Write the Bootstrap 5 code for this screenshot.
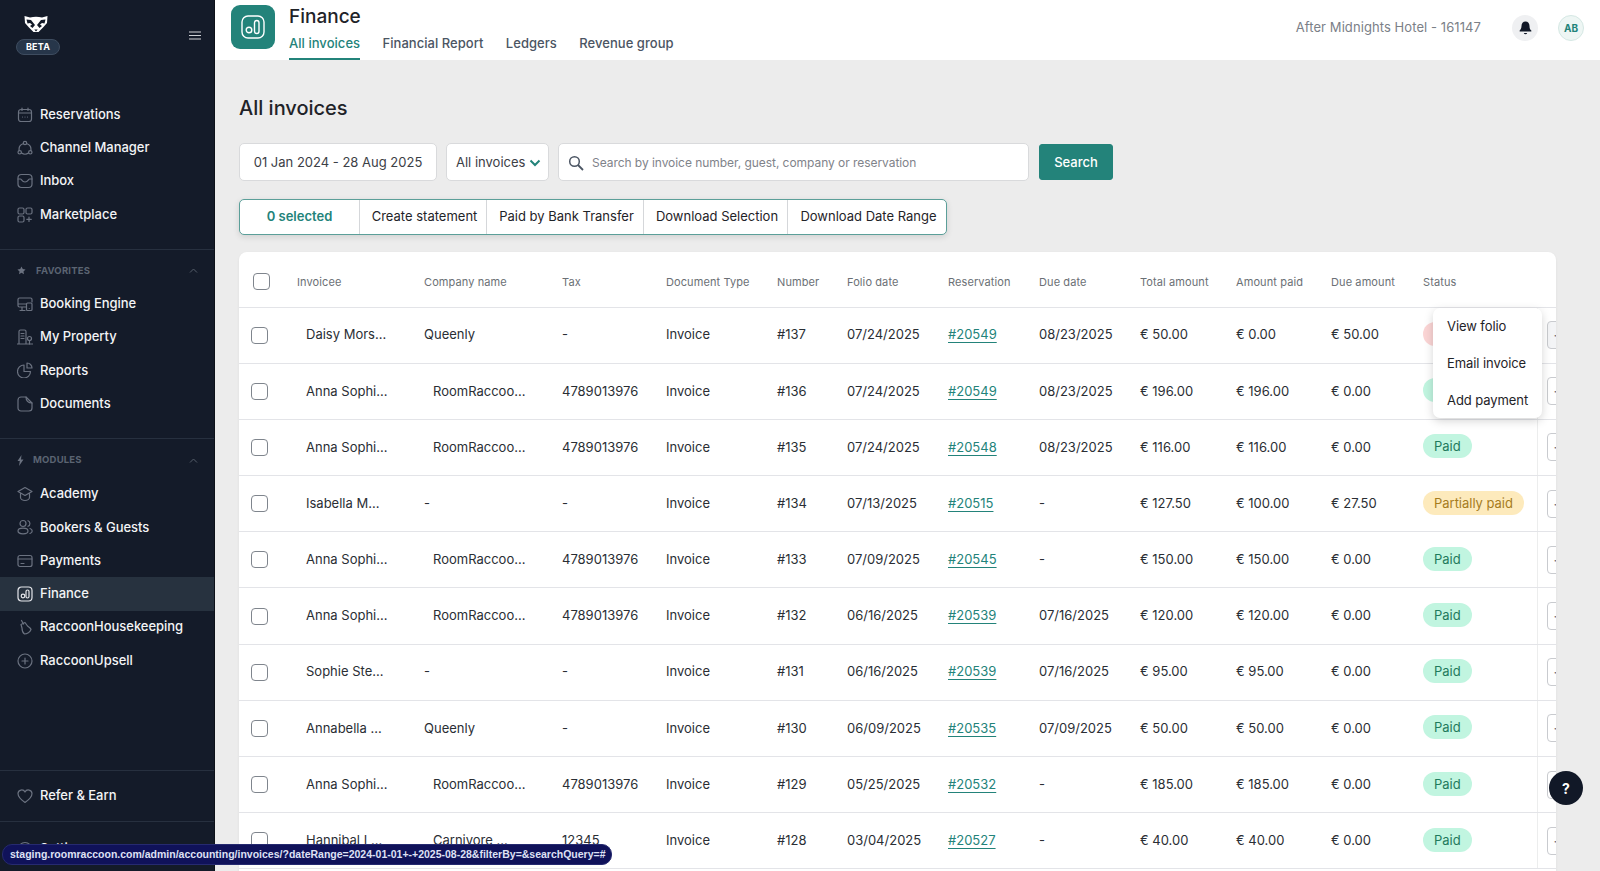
<!doctype html>
<html lang="en"><head><meta charset="utf-8"><title>All invoices</title>
<link rel="stylesheet" href="https://cdn.jsdelivr.net/npm/bootstrap@5.3.0/dist/css/bootstrap.min.css">
<style>
html,body{height:871px;overflow:hidden}
body{font-family:Inter,"Liberation Sans",sans-serif;background:#ececec;color:#1f2328;font-size:13px}
.app-shell{height:871px}
.side{width:215px;flex:none;background:#141b29;color:#f3f4f6;height:871px;overflow:hidden;border-right:1px solid #0d1119}
.side-top{height:98px;padding:15px 12px 0 16px}
.beta-pill{width:44px;height:16px;margin-top:6px;border-radius:8px;background:#27364a;border:1px solid #3e4c5f;font-size:9px;font-weight:700;color:#fff;line-height:14px;text-align:center;letter-spacing:.2px}
.side-link{height:33.3px;padding-left:17px;gap:7px;color:#f3f4f6;font-size:13px;font-weight:500;text-decoration:none;white-space:nowrap;letter-spacing:-.03px}
.side-link svg{width:16px;height:16px;flex:none;stroke:#6b7280;fill:none;stroke-width:1.2;stroke-linecap:round;stroke-linejoin:round}
.side-link.on{background:#27323f}
.side-link.on svg{stroke:#e5e7eb}
.side-sect{border-top:1px solid #27303f}
.sect-head{height:37px;padding:4px 16px 0 17px;color:#5b6472;font-size:9.5px;font-weight:700;letter-spacing:.2px}
.top-head{height:60px;background:#fff;padding:5px 0 0 16px;position:relative}
.app-tile{width:44px;height:44px;border-radius:9px;background:#23837a;margin-right:14px}
.page-name{font-size:19px;font-weight:500;line-height:22px;color:#1f2328;margin-top:1px}
.tab-link{font-size:13px;font-weight:500;color:#4b5563;text-decoration:none;padding:8px 0 6px;line-height:17px;border-bottom:2px solid transparent;margin-right:22.4px;letter-spacing:.04px}
.tab-link.on{color:#23837a;border-color:#23837a}
.hotel-name{font-size:13px;color:#7b8087;margin-right:31px;letter-spacing:.08px}
.round-btn{width:26px;height:26px;border-radius:50%;background:#eff0f2}
.avatar-btn{width:26px;height:26px;border-radius:50%;background:#eef6f4;border:1px solid #d5e8e4;color:#23837a;font-size:10px;font-weight:700;margin:0 16px 0 20px}
.work-area{padding:0 44px 0 24px;position:relative}
.title-big{font-size:20px;font-weight:500;color:#1f2328;margin:35px 0 21px;line-height:27px}
.filter-box{height:38px;background:#fff;border:1px solid #d9dadc;border-radius:5px;font-size:13px;color:#3c4046;padding-top:1px}
.date-box{width:198px}
.select-box{width:103px;margin-left:9px;padding-left:9px}
.search-box{width:471px;margin-left:9px;padding-left:9px;font-size:12px;color:#7f838a;letter-spacing:-.05px}
.btn-go{width:74px;height:36px;margin-left:10px;background:#23837a;border:1px solid #23837a;color:#fff;font-size:13px;font-weight:500;border-radius:3px;padding:1px 0 0}
.act-group{height:36px;width:708px;margin-top:18px;background:#fff;border:1px solid #5b9f99;border-radius:5px;box-shadow:0 2px 6px rgba(0,0,0,.12);overflow:hidden}
.act-group>div{border-right:1px solid #d5d7da;font-size:13px;color:#1f2328;padding-left:3px}
.act-group>div:last-child{border-right:0}
.act-group>div.sel-count{color:#23837a;font-weight:600;padding-left:0}
.grid-card{width:1317px;height:640px;margin-top:17px;background:#fff;border-radius:8px 8px 0 0;box-shadow:0 1px 3px rgba(0,0,0,.06);overflow:hidden}
.inv-grid{table-layout:fixed;width:1377px;margin:0;--bs-table-border-color:#e3e4e8;font-size:13px;color:#2a2e34}
.inv-grid th{height:55px;padding:5px 0 0;font-size:11px;font-weight:400;color:#6b7075;vertical-align:middle;letter-spacing:.1px;white-space:nowrap}
.inv-grid td{height:56.2px;padding:0;vertical-align:middle;color:#2a2e34;white-space:nowrap}
.inv-grid .tick{width:17px;height:17px;margin:0 0 0 12px;border:1.5px solid #7f858d;border-radius:4px;display:block;float:none}
.inv-grid th .tick{margin-left:14px}
.push-name{padding-left:9px!important}
.push-comp{padding-left:9px!important}
.res-link{color:#23837a;text-decoration:underline;text-underline-offset:3px}
.pill-state{display:inline-block;height:24px;line-height:24px;border-radius:12px;padding:0 11px;font-size:13px;letter-spacing:-.02px;position:relative;top:-1px}
.st-paid{background:#c1f5e0;color:#1f7a5c}
.st-part{background:#fdeabc;color:#a67c1e}
.st-open{background:#fbd5d5;color:#b42318}
.act-cell{border-left:1px solid #eceded;box-shadow:-3px 0 5px rgba(0,0,0,.03)}
.dots-btn{display:block;width:40px;height:28px;margin-left:9px;border:1px solid #c9cbcf;border-radius:4px;background:#fff;color:#6b7075;font-size:13px;line-height:24px;padding:0 0 0 6px;text-align:left;letter-spacing:1px}
.dots-btn.active-row{background:#f3f4f6}
.row-menu{position:absolute;display:block;left:1218px;top:248px;width:109px;min-width:0;height:110px;padding:0;border:0;border-radius:7px;box-shadow:0 3px 10px rgba(0,0,0,.17);z-index:5}
.row-menu .dropdown-item{padding:0 0 0 14px;height:36.800px;line-height:36px;font-size:13px;color:#1f2328;letter-spacing:-.08px}
.help-fab{position:fixed;left:1549px;top:771px;width:34px;height:34px;border-radius:50%;background:#111827;color:#fff;font-weight:700;font-size:14px;z-index:6}
.status-url{position:fixed;left:2px;top:844px;width:610px;height:21px;border-radius:10px;background:#10125a;border:1px solid #262a70;color:#dfe1f5;font-family:"Liberation Sans",sans-serif;font-weight:700;font-size:10.5px;line-height:19px;padding-left:7px;white-space:nowrap;z-index:7}
</style></head>
<body>
<div class="d-flex app-shell">
<nav class="side d-flex flex-column flex-none">
  <div class="side-top d-flex justify-content-between">
    <div class="d-flex flex-column">
      <svg class="ms-2" width="24" height="18" viewBox="0 0 24 18" aria-hidden="true"><path fill="#fff" d="M.5 1L6 2.500Q12 1 18 2.500L23.500 1 23 8l-3.500 4-5 5h-5l-5-5L1 8z"/><path fill="#141b29" d="M2.500 4.500L7 5l4 5-2.500 3L6 11l2-1.500-2-1.500-2.500.5zM21.500 4.500L17 5l-4 5 2.500 3L18 11l-2-1.500 2-1.500 2.500.5zM10.300 14.500h3.400L12 16.500z"/></svg>
      <div class="beta-pill">BETA</div>
    </div>
    <svg width="14" height="9" viewBox="0 0 14 9" style="margin-top:16px" aria-hidden="true"><path d="M1 1h12M1 4.500h12M1 8h12" stroke="#cfd2d6" stroke-width="1.200"/></svg>
  </div>
  <div style="padding-bottom:18px">
    <a class="side-link d-flex align-items-center" href="#"><svg viewBox="0 0 16 16"><rect x="1.500" y="2.500" width="13" height="12" rx="2.500"/><path d="M1.500 6h13M5 1v2.500M11 1v2.500M5.500 10h.01M8 10h.01M10.500 10h.01"/></svg>Reservations</a>
    <a class="side-link d-flex align-items-center" href="#"><svg viewBox="0 0 16 16"><circle cx="8" cy="3" r="1.700"/><circle cx="2.700" cy="12.300" r="1.700"/><circle cx="13.300" cy="12.300" r="1.700"/><path d="M6 3.800A6 6 0 0 0 2.200 10.500M10 3.800a6 6 0 0 1 3.800 6.700M4.500 13a6 6 0 0 0 7 0"/></svg>Channel Manager</a>
    <a class="side-link d-flex align-items-center" href="#"><svg viewBox="0 0 16 16"><rect x="1" y="1.500" width="14" height="13" rx="3.500"/><path d="M1 6h2.500c1 0 1.500 3 4.500 3s3.500-3 4.500-3H15"/></svg>Inbox</a>
    <a class="side-link d-flex align-items-center" href="#"><svg viewBox="0 0 16 16"><rect x="1" y="1" width="6" height="6" rx="1.500"/><rect x="9" y="1" width="6" height="6" rx="1.500"/><rect x="1" y="9" width="6" height="6" rx="1.500"/><path d="M12 10v4.500M9.800 12.300h4.500"/></svg>Marketplace</a>
  </div>
  <div class="side-sect" style="padding-bottom:18px">
    <div class="sect-head d-flex align-items-center"><svg width="9" height="9" viewBox="0 0 10 10" aria-hidden="true"><path fill="#6b7280" d="M5 .5l1.400 2.900 3.100.4-2.300 2.200.6 3.200L5 7.600 2.200 9.200l.6-3.200L.5 3.800l3.100-.4z"/></svg><span style="margin-left:10px" class="flex-grow-1">FAVORITES</span><svg width="9" height="5" viewBox="0 0 9 5" aria-hidden="true"><path d="M1 4.500L4.500 1 8 4.500" stroke="#555e6b" fill="none"/></svg></div>
    <a class="side-link d-flex align-items-center" href="#"><svg viewBox="0 0 16 16"><path d="M9 11H2.500a1.500 1.500 0 0 1-1.500-1.500v-6A1.500 1.500 0 0 1 2.500 2h11A1.500 1.500 0 0 1 15 3.500V6M1 8h8M5 11v3.500M3 14.500h5"/><rect x="9.500" y="7" width="5.500" height="7.500" rx="1"/><path d="M12.200 12.500h.01"/></svg>Booking Engine</a>
    <a class="side-link d-flex align-items-center" href="#"><svg viewBox="0 0 16 16"><path d="M2 15V2.500A1.500 1.500 0 0 1 3.500 1h4A1.500 1.500 0 0 1 9 2.500V15M.5 15h15M4 4.500h3M4 7h3M4 9.500h3"/><circle cx="12.500" cy="9.500" r="2"/><path d="M12.500 11.500V15"/></svg>My Property</a>
    <a class="side-link d-flex align-items-center" href="#"><svg viewBox="0 0 16 16"><path d="M7 3a6.500 6.500 0 1 0 6.500 6.500H7z"/><path d="M10 1a5 5 0 0 1 5 5h-5z"/></svg>Reports</a>
    <a class="side-link d-flex align-items-center" href="#"><svg viewBox="0 0 16 16"><path d="M4 1h5l6 6v5a3 3 0 0 1-3 3H4a3 3 0 0 1-3-3V4a3 3 0 0 1 3-3z"/><path d="M9 1c0 3.500 2 6 6 6"/></svg>Documents</a>
  </div>
  <div class="side-sect">
    <div class="sect-head d-flex align-items-center" style="height:38px"><svg width="7" height="11" viewBox="0 0 7 11" aria-hidden="true"><path fill="#6b7280" d="M4.500 0L.5 6h2.300L2 11l4.500-6.500H4z"/></svg><span style="margin-left:9px" class="flex-grow-1">MODULES</span><svg width="9" height="5" viewBox="0 0 9 5" aria-hidden="true"><path d="M1 4.500L4.500 1 8 4.500" stroke="#555e6b" fill="none"/></svg></div>
    <a class="side-link d-flex align-items-center" href="#"><svg viewBox="0 0 16 16"><path d="M8 1.500L1 5.500l7 4 7-4zM3.500 7.500v4c0 1.500 2 3 4.500 3s4.500-1.500 4.500-3v-4"/></svg>Academy</a>
    <a class="side-link d-flex align-items-center" href="#"><svg viewBox="0 0 16 16"><circle cx="6" cy="4.500" r="3"/><ellipse cx="6" cy="12" rx="5" ry="2.800"/><path d="M11 1.700a3 3 0 0 1 0 5.600M13 9.500c1.500.5 2.200 1.500 2.200 2.500S14.500 14 13 14.500"/></svg>Bookers &amp; Guests</a>
    <a class="side-link d-flex align-items-center" href="#"><svg viewBox="0 0 16 16"><rect x="1" y="2.500" width="14" height="11" rx="2"/><path d="M1 6h14M4 10.500h3"/></svg>Payments</a>
    <a class="side-link on d-flex align-items-center" href="#"><svg viewBox="0 0 16 16"><rect x="1" y="1" width="14" height="14" rx="3.500"/><circle cx="6" cy="10" r="1.800"/><rect x="9" y="4" width="3" height="8" rx="1.500"/></svg>Finance</a>
    <a class="side-link d-flex align-items-center" href="#"><svg viewBox="0 0 16 16"><path d="M4.500 1.500l2 3.500M4 5.500L8 3.500l2.500 3.500c1.500 1 3 2 3.500 3.500-1 2.500-4 4.500-6.500 4.500-1.500-1-2.500-4-2.500-6z"/></svg>RaccoonHousekeeping</a>
    <a class="side-link d-flex align-items-center" href="#"><svg viewBox="0 0 16 16"><circle cx="8" cy="8" r="7"/><path d="M8 5v6M5 8h6"/></svg>RaccoonUpsell</a>
  </div>
  <div class="mt-auto side-sect" style="height:51px">
    <a class="side-link d-flex align-items-center h-100" href="#"><svg viewBox="0 0 16 16"><path d="M8 14.500C3 11 1 8.500 1 5.500A3.700 3.700 0 0 1 8 4a3.700 3.700 0 0 1 7 1.500c0 3-2 5.500-7 9z"/></svg>Refer &amp; Earn</a>
  </div>
  <div class="side-sect" style="height:50px">
    <a class="side-link d-flex align-items-center" style="margin-top:10px" href="#"><svg viewBox="0 0 16 16"><circle cx="8" cy="8" r="6.500"/><circle cx="8" cy="8" r="2.500"/></svg>Settings</a>
  </div>
</nav>
<div class="flex-grow-1 d-flex flex-column" style="min-width:0">
  <header class="top-head d-flex flex-none">
    <div class="app-tile d-flex align-items-center justify-content-center flex-none"><svg width="24" height="24" viewBox="0 0 24 24" fill="none" stroke="#fff" stroke-width="1.400" aria-hidden="true"><rect x="1" y="1" width="22" height="22" rx="6"/><circle cx="8" cy="15" r="2.800"/><rect x="13.500" y="5.500" width="4.500" height="13" rx="2.250"/></svg></div>
    <div class="d-flex flex-column">
      <div class="page-name">Finance</div>
      <div class="d-flex" style="margin-top:-1px">
        <a class="tab-link on" href="#">All invoices</a><a class="tab-link" href="#">Financial Report</a><a class="tab-link" href="#">Ledgers</a><a class="tab-link" href="#">Revenue group</a>
      </div>
    </div>
    <div class="ms-auto d-flex align-items-center" style="margin-top:-9px">
      <span class="hotel-name">After Midnights Hotel - 161147</span>
      <span class="round-btn d-flex align-items-center justify-content-center"><svg width="13" height="14" viewBox="0 0 13 14" aria-hidden="true"><path fill="#111827" d="M6.500 0.500c-2.500 0-4 2-4 4.500 0 2.500-1 3.500-1.800 4.500-.3.500 0 1 .5 1h10.600c.5 0 .8-.5.5-1C11 8.500 10.500 7.500 10.500 5c0-2.500-1.500-4.500-4-4.500zM4.800 12a1.800 1.800 0 0 0 3.400 0z"/></svg></span>
      <span class="avatar-btn d-flex align-items-center justify-content-center">AB</span>
    </div>
  </header>
  <main class="work-area flex-grow-1">
    <h1 class="title-big">All invoices</h1>
    <div class="d-flex align-items-center">
      <div class="filter-box date-box d-flex align-items-center justify-content-center">01 Jan 2024 - 28 Aug 2025</div>
      <div class="filter-box select-box d-flex align-items-center">All invoices<svg class="ms-1" width="12" height="8" viewBox="0 0 12 8" aria-hidden="true"><path d="M1.500 1.500L6 6l4.500-4.500" stroke="#23837a" stroke-width="2" fill="none"/></svg></div>
      <div class="filter-box search-box d-flex align-items-center"><svg class="me-2" width="16" height="16" viewBox="0 0 16 16" aria-hidden="true"><circle cx="6.500" cy="6.500" r="4.800" fill="none" stroke="#4b5563" stroke-width="1.500"/><path d="M10 10l5 5" stroke="#4b5563" stroke-width="1.800"/></svg><span>Search by invoice number, guest, company or reservation</span></div>
      <button class="btn btn-go" type="button">Search</button>
    </div>
    <div class="act-group d-flex">
      <div class="sel-count d-flex align-items-center justify-content-center" style="width:120px">0 selected</div>
      <div class="d-flex align-items-center justify-content-center" style="width:127px">Create statement</div>
      <div class="d-flex align-items-center justify-content-center" style="width:157px">Paid by Bank Transfer</div>
      <div class="d-flex align-items-center justify-content-center" style="width:144px">Download Selection</div>
      <div class="d-flex align-items-center justify-content-center flex-grow-1">Download Date Range</div>
    </div>
    <div class="grid-card">
      <table class="table inv-grid">
        <colgroup><col style="width:58px"><col style="width:127px"><col style="width:138px"><col style="width:104px"><col style="width:111px"><col style="width:70px"><col style="width:101px"><col style="width:91px"><col style="width:101px"><col style="width:96px"><col style="width:95px"><col style="width:92px"><col style="width:114px"><col style="width:79px"></colgroup>
        <thead><tr><th><input class="form-check-input tick" type="checkbox" aria-label="Select all"></th><th>Invoicee</th><th>Company name</th><th>Tax</th><th>Document Type</th><th>Number</th><th>Folio date</th><th>Reservation</th><th>Due date</th><th>Total amount</th><th>Amount paid</th><th>Due amount</th><th>Status</th><th></th></tr></thead>
        <tbody>
        <tr><td><input class="form-check-input tick" type="checkbox" aria-label="Select"></td><td class="push-name">Daisy Mors...</td><td>Queenly</td><td>-</td><td>Invoice</td><td>#137</td><td>07/24/2025</td><td><a class="res-link" href="#">#20549</a></td><td>08/23/2025</td><td>€ 50.00</td><td>€ 0.00</td><td>€ 50.00</td><td><span class="pill-state st-open">Unpaid</span></td><td class="act-cell"><button class="dots-btn active-row" type="button">···</button></td></tr>
        <tr><td><input class="form-check-input tick" type="checkbox" aria-label="Select"></td><td class="push-name">Anna Sophi...</td><td class="push-comp">RoomRaccoo...</td><td>4789013976</td><td>Invoice</td><td>#136</td><td>07/24/2025</td><td><a class="res-link" href="#">#20549</a></td><td>08/23/2025</td><td>€ 196.00</td><td>€ 196.00</td><td>€ 0.00</td><td><span class="pill-state st-paid">Paid</span></td><td class="act-cell"><button class="dots-btn" type="button">···</button></td></tr>
        <tr><td><input class="form-check-input tick" type="checkbox" aria-label="Select"></td><td class="push-name">Anna Sophi...</td><td class="push-comp">RoomRaccoo...</td><td>4789013976</td><td>Invoice</td><td>#135</td><td>07/24/2025</td><td><a class="res-link" href="#">#20548</a></td><td>08/23/2025</td><td>€ 116.00</td><td>€ 116.00</td><td>€ 0.00</td><td><span class="pill-state st-paid">Paid</span></td><td class="act-cell"><button class="dots-btn" type="button">···</button></td></tr>
        <tr><td><input class="form-check-input tick" type="checkbox" aria-label="Select"></td><td class="push-name">Isabella M...</td><td>-</td><td>-</td><td>Invoice</td><td>#134</td><td>07/13/2025</td><td><a class="res-link" href="#">#20515</a></td><td>-</td><td>€ 127.50</td><td>€ 100.00</td><td>€ 27.50</td><td><span class="pill-state st-part">Partially paid</span></td><td class="act-cell"><button class="dots-btn" type="button">···</button></td></tr>
        <tr><td><input class="form-check-input tick" type="checkbox" aria-label="Select"></td><td class="push-name">Anna Sophi...</td><td class="push-comp">RoomRaccoo...</td><td>4789013976</td><td>Invoice</td><td>#133</td><td>07/09/2025</td><td><a class="res-link" href="#">#20545</a></td><td>-</td><td>€ 150.00</td><td>€ 150.00</td><td>€ 0.00</td><td><span class="pill-state st-paid">Paid</span></td><td class="act-cell"><button class="dots-btn" type="button">···</button></td></tr>
        <tr><td><input class="form-check-input tick" type="checkbox" aria-label="Select"></td><td class="push-name">Anna Sophi...</td><td class="push-comp">RoomRaccoo...</td><td>4789013976</td><td>Invoice</td><td>#132</td><td>06/16/2025</td><td><a class="res-link" href="#">#20539</a></td><td>07/16/2025</td><td>€ 120.00</td><td>€ 120.00</td><td>€ 0.00</td><td><span class="pill-state st-paid">Paid</span></td><td class="act-cell"><button class="dots-btn" type="button">···</button></td></tr>
        <tr><td><input class="form-check-input tick" type="checkbox" aria-label="Select"></td><td class="push-name">Sophie Ste...</td><td>-</td><td>-</td><td>Invoice</td><td>#131</td><td>06/16/2025</td><td><a class="res-link" href="#">#20539</a></td><td>07/16/2025</td><td>€ 95.00</td><td>€ 95.00</td><td>€ 0.00</td><td><span class="pill-state st-paid">Paid</span></td><td class="act-cell"><button class="dots-btn" type="button">···</button></td></tr>
        <tr><td><input class="form-check-input tick" type="checkbox" aria-label="Select"></td><td class="push-name">Annabella ...</td><td>Queenly</td><td>-</td><td>Invoice</td><td>#130</td><td>06/09/2025</td><td><a class="res-link" href="#">#20535</a></td><td>07/09/2025</td><td>€ 50.00</td><td>€ 50.00</td><td>€ 0.00</td><td><span class="pill-state st-paid">Paid</span></td><td class="act-cell"><button class="dots-btn" type="button">···</button></td></tr>
        <tr><td><input class="form-check-input tick" type="checkbox" aria-label="Select"></td><td class="push-name">Anna Sophi...</td><td class="push-comp">RoomRaccoo...</td><td>4789013976</td><td>Invoice</td><td>#129</td><td>05/25/2025</td><td><a class="res-link" href="#">#20532</a></td><td>-</td><td>€ 185.00</td><td>€ 185.00</td><td>€ 0.00</td><td><span class="pill-state st-paid">Paid</span></td><td class="act-cell"><button class="dots-btn" type="button">···</button></td></tr>
        <tr><td><input class="form-check-input tick" type="checkbox" aria-label="Select"></td><td class="push-name">Hannibal L...</td><td class="push-comp">Carnivore ...</td><td>12345</td><td>Invoice</td><td>#128</td><td>03/04/2025</td><td><a class="res-link" href="#">#20527</a></td><td>-</td><td>€ 40.00</td><td>€ 40.00</td><td>€ 0.00</td><td><span class="pill-state st-paid">Paid</span></td><td class="act-cell"><button class="dots-btn" type="button">···</button></td></tr>
        </tbody>
      </table>
    </div>
    <div class="dropdown-menu row-menu show"><a class="dropdown-item" href="#">View folio</a><a class="dropdown-item" href="#">Email invoice</a><a class="dropdown-item" href="#">Add payment</a></div>
  </main>
</div>
</div>
<div class="help-fab d-flex align-items-center justify-content-center">?</div>
<div class="status-url">staging.roomraccoon.com/admin/accounting/invoices/?dateRange=2024-01-01+-+2025-08-28&amp;filterBy=&amp;searchQuery=#</div>
<script src="https://cdn.jsdelivr.net/npm/bootstrap@5.3.0/dist/js/bootstrap.bundle.min.js"></script>
</body></html>
